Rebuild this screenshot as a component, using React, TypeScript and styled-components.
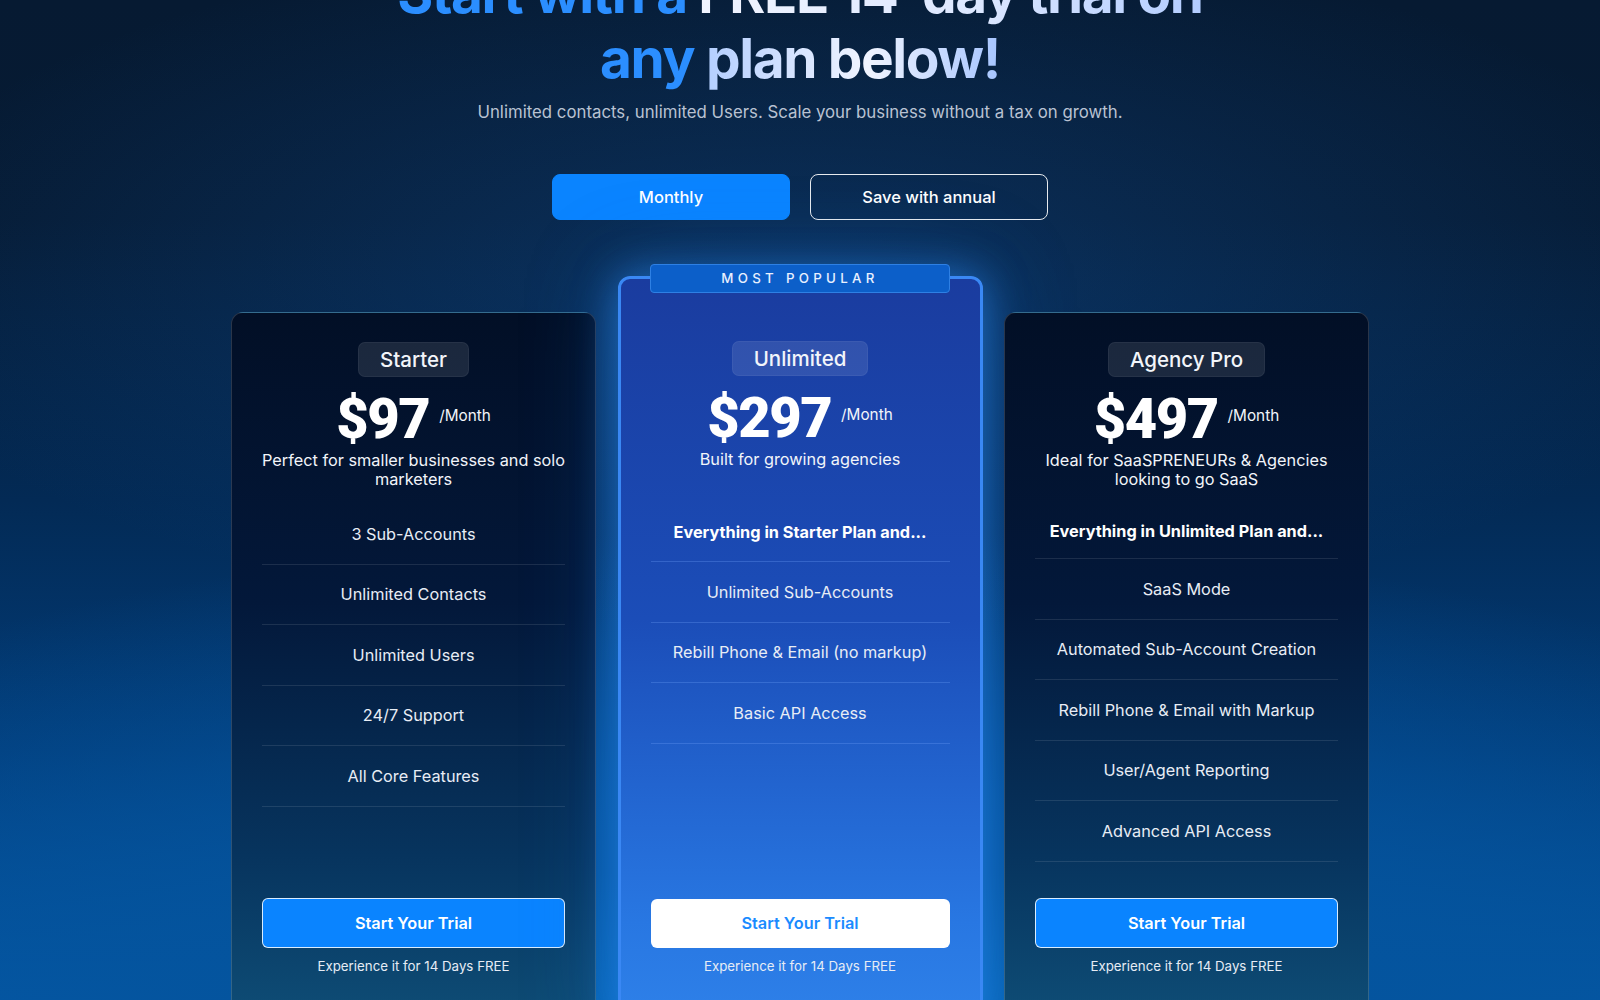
import React from 'react';
import styled, { createGlobalStyle } from 'styled-components';

const FONT = `Inter, "Open Sans", "Liberation Sans", sans-serif`;

const GlobalStyle = createGlobalStyle`
    html, body {
        margin: 0;
        padding: 0;
        background: #061a32;
    }
    * {
        box-sizing: border-box;
    }
`;

const Page = styled.div`
    height: 1000px;
    overflow: hidden;
    font-family: ${FONT};
    color: #ffffff;
    background:
        radial-gradient(ellipse 60% 35% at 50% 28%, rgba(20, 90, 170, 0.35) 0%, rgba(20, 90, 170, 0) 100%),
        radial-gradient(ellipse 90% 55% at 50% 108%, #0872c6 0%, #04549e 40%, rgba(3, 60, 120, 0) 100%),
        linear-gradient(180deg, #061a32 0%, #061b34 22%, #032a55 50%, #023d7a 75%, #0458a6 100%);
`;

const Content = styled.main`
    display: flex;
    flex-direction: column;
    align-items: center;
`;

const Heading = styled.h1`
    margin: -39px 0 0;
    font-size: 55px;
    line-height: 65px;
    font-weight: 700;
    letter-spacing: -1.4px;
    text-align: center;
`;

const Accent = styled.span`
    color: #2b8eff;
`;

const Shine = styled.span<{ $from: string; $mid: string; $to: string }>`
    background: linear-gradient(90deg, ${(p) => p.$from} 0%, ${(p) => p.$mid} 55%, ${(p) => p.$to} 100%);
    -webkit-background-clip: text;
    background-clip: text;
    color: transparent;
`;

const Subtitle = styled.p`
    margin: 9px 0 0;
    font-size: 16.8px;
    line-height: 24px;
    color: #b9c2d2;
`;

const Toggle = styled.div`
    display: flex;
    gap: 20px;
    margin-top: 50px;
`;

const ToggleButton = styled.button<{ $active?: boolean }>`
    width: 238px;
    height: 46px;
    border-radius: 8px;
    font-family: ${FONT};
    font-size: 16.5px;
    font-weight: 500;
    color: #ffffff;
    cursor: pointer;
    background: ${(p) => (p.$active ? '#0a84ff' : 'transparent')};
    border: 1px solid ${(p) => (p.$active ? '#0a84ff' : 'rgba(255, 255, 255, 0.9)')};
`;

const Plans = styled.div`
    display: grid;
    grid-template-columns: repeat(3, 365px);
    gap: 21.5px;
    margin-top: 56px;
`;

const Card = styled.div<{ $featured?: boolean }>`
    position: relative;
    display: flex;
    flex-direction: column;
    align-items: center;
    border-radius: 12px;
    padding: ${(p) => (p.$featured ? '62px 30px 60px' : '29px 30px 62px')};
    margin-top: ${(p) => (p.$featured ? '0' : '36px')};
    border: ${(p) => (p.$featured ? '3px solid #3a88f4' : '1px solid rgba(255, 255, 255, 0.16)')};
    background: ${(p) =>
        p.$featured
            ? 'linear-gradient(180deg, #1a3c9f 0%, #1b4db8 45%, #2877e2 85%, #2f82ea 100%)'
            : 'linear-gradient(180deg, #020f26 0%, #03183a 40%, #07345e 75%, #0f5079 100%)'};
    box-shadow: ${(p) =>
        p.$featured ? '0 0 40px rgba(50, 150, 255, 0.55), 0 0 90px rgba(30, 120, 230, 0.35)' : 'none'};
`;

const Badge = styled.div`
    position: absolute;
    top: -15.5px;
    left: 29.5px;
    right: 29.5px;
    height: 29px;
    display: flex;
    align-items: center;
    justify-content: center;
    background: #0c5fc9;
    border: 1px solid #2e80e4;
    border-radius: 4px;
    font-size: 13.3px;
    font-weight: 500;
    letter-spacing: 4.3px;
    color: #e8f0ff;
`;

const PlanName = styled.div`
    height: 35px;
    padding: 0 21px;
    display: flex;
    align-items: center;
    border-radius: 7px;
    background: rgba(255, 255, 255, 0.1);
    border: 1px solid rgba(255, 255, 255, 0.05);
    font-size: 20.5px;
    font-weight: 500;
    color: #f2f5fa;
`;

const PriceRow = styled.div`
    display: flex;
    align-items: center;
    gap: 10px;
    margin-top: 15px;
    height: 54px;
`;

const Price = styled.span`
    font-family: Roboto, ${FONT};
    font-size: 56px;
    line-height: 54px;
    font-weight: 900;
    letter-spacing: -1.5px;
`;

const Per = styled.span`
    font-size: 15.3px;
    line-height: 18px;
    margin-bottom: 6px;
    color: #f2f5fa;
`;

const Description = styled.p`
    margin: 5px 0 0;
    min-height: 37px;
    font-size: 16.3px;
    line-height: 18.5px;
    text-align: center;
    color: #f2f5fa;
`;

const Features = styled.ul`
    list-style: none;
    margin: 16px 0 0;
    padding: 0;
    width: 100%;
`;

const Feature = styled.li<{ $height: number; $lead?: boolean; $featured?: boolean }>`
    height: ${(p) => p.$height}px;
    display: flex;
    align-items: center;
    justify-content: center;
    border-bottom: 1px solid ${(p) => (p.$featured ? 'rgba(120, 170, 255, 0.28)' : 'rgba(255, 255, 255, 0.1)')};
    font-size: 16.3px;
    font-weight: ${(p) => (p.$lead ? 700 : 400)};
    color: ${(p) => (p.$lead ? '#ffffff' : '#e8edf5')};
`;

const Spacer = styled.div`
    height: 36px;
    flex-shrink: 0;
`;

const TrialButton = styled.button<{ $light?: boolean }>`
    margin-top: auto;
    width: 100%;
    height: ${(p) => (p.$light ? '49px' : '50px')};
    border-radius: 6px;
    font-family: ${FONT};
    font-size: 16.3px;
    font-weight: 600;
    cursor: pointer;
    background: ${(p) => (p.$light ? '#ffffff' : '#0a84ff')};
    color: ${(p) => (p.$light ? '#1a8bff' : '#ffffff')};
    border: ${(p) => (p.$light ? 'none' : '1px solid rgba(255, 255, 255, 0.85)')};
`;

const Caption = styled.p`
    margin: 9px 0 0;
    font-size: 13.3px;
    line-height: 18px;
    color: #e6ecf5;
`;

type Plan = {
    name: string;
    price: string;
    description: string;
    lead?: string;
    leadHeight?: number;
    features: string[];
    featured?: boolean;
};

const plans: Plan[] = [
    {
        name: 'Starter',
        price: '$97',
        description: 'Perfect for smaller businesses and solo marketers',
        features: ['3 Sub-Accounts', 'Unlimited Contacts', 'Unlimited Users', '24/7 Support', 'All Core Features'],
    },
    {
        name: 'Unlimited',
        price: '$297',
        description: 'Built for growing agencies',
        lead: 'Everything in Starter Plan and...',
        leadHeight: 59,
        features: ['Unlimited Sub-Accounts', 'Rebill Phone & Email (no markup)', 'Basic API Access'],
        featured: true,
    },
    {
        name: 'Agency Pro',
        price: '$497',
        description: 'Ideal for SaaSPRENEURs & Agencies looking to go SaaS',
        lead: 'Everything in Unlimited Plan and...',
        leadHeight: 55,
        features: [
            'SaaS Mode',
            'Automated Sub-Account Creation',
            'Rebill Phone & Email with Markup',
            'User/Agent Reporting',
            'Advanced API Access',
        ],
    },
];

export default function App() {
    return (
        <Page>
            <GlobalStyle />
            <Content>
                <Heading>
                    <Accent>Start with a </Accent>
                    <Shine $from="#f2f5ff" $mid="#dce7ff" $to="#b3cdff">FREE 14-day trial on</Shine>
                    <br />
                    <Accent>any </Accent>
                    <Shine $from="#b4cfff" $mid="#f0f4ff" $to="#a6c5ff">plan below!</Shine>
                </Heading>
                <Subtitle>Unlimited contacts, unlimited Users. Scale your business without a tax on growth.</Subtitle>

                <Toggle>
                    <ToggleButton $active>Monthly</ToggleButton>
                    <ToggleButton>Save with annual</ToggleButton>
                </Toggle>

                <Plans>
                    {plans.map((plan) => (
                        <Card key={plan.name} $featured={plan.featured}>
                            {plan.featured && <Badge>MOST POPULAR</Badge>}
                            <PlanName>{plan.name}</PlanName>
                            <PriceRow>
                                <Price>{plan.price}</Price>
                                <Per>/Month</Per>
                            </PriceRow>
                            <Description>{plan.description}</Description>
                            <Features>
                                {plan.lead && (
                                    <Feature $lead $height={plan.leadHeight ?? 57} $featured={plan.featured}>
                                        {plan.lead}
                                    </Feature>
                                )}
                                {plan.features.map((f) => (
                                    <Feature key={f} $height={60.5} $featured={plan.featured}>
                                        {f}
                                    </Feature>
                                ))}
                            </Features>
                            <Spacer />
                            <TrialButton $light={plan.featured}>Start Your Trial</TrialButton>
                            <Caption>Experience it for 14 Days FREE</Caption>
                        </Card>
                    ))}
                </Plans>
            </Content>
        </Page>
    );
}
